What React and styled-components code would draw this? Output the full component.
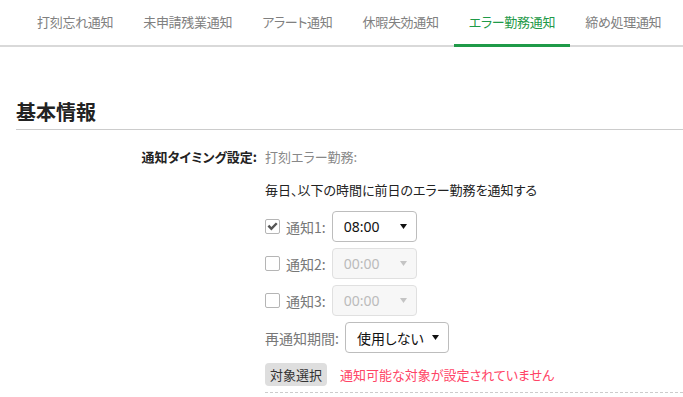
import React from 'react'
import styled, { createGlobalStyle, css } from 'styled-components'

const GlobalStyle = createGlobalStyle`
  body {
    margin: 0;
    background: #fff;
    font-family: "Noto Sans CJK JP", "Noto Sans", sans-serif;
    font-size: 13px;
    color: #333;
    font-feature-settings: "palt";
  }
`

const TabBar = styled.nav`
  display: flex;
  padding-left: 22px;
  border-bottom: 2px solid #d9d9d9;
`

const Tab = styled.div`
  height: 44px;
  line-height: 44px;
  padding: 0 15px;
  margin-bottom: -2px;
  border-bottom: 3px solid transparent;
  color: #808080;
  font-size: 13px;
  letter-spacing: -0.3px;
  white-space: nowrap;
  ${props => props.active && css`
    color: #1f9a48;
    border-bottom-color: #1f9a48;
  `}
`

const Heading = styled.h2`
  margin: 50px 0 0 16px;
  padding-bottom: 2px;
  font-size: 20px;
  font-weight: bold;
  line-height: 30px;
  color: #222;
  border-bottom: 1px solid #cccccc;
`

const Form = styled.div`
  display: grid;
  grid-template-columns: 257px 1fr;
  column-gap: 8px;
  margin-top: 17px;
`

const Label = styled.div`
  text-align: right;
  font-weight: bold;
  line-height: 20px;
  color: #222;
`

const Content = styled.div`
  display: flex;
  flex-direction: column;
  border-bottom: 1px dashed #cccccc;
  padding-bottom: 6px;
`

const Muted = styled.div`
  line-height: 20px;
  color: #888;
`

const Text = styled.div`
  line-height: 20px;
  margin-top: 13px;
  margin-bottom: 11px;
  color: #222;
`

const Row = styled.div`
  display: flex;
  align-items: center;
  gap: 6px;
  margin-bottom: ${props => props.last ? '10px' : '6px'};
`

const Box = styled.span`
  width: 15px;
  height: 15px;
  box-sizing: border-box;
  border: 1px solid #b5b5b5;
  border-radius: 2px;
  background: #fff;
  display: flex;
  align-items: center;
  justify-content: center;
`

const RowLabel = styled.span`
  color: #777;
  font-size: 14px;
  line-height: 20px;
  font-feature-settings: normal;
`

const SelectBox = styled.div`
  box-sizing: border-box;
  width: ${props => props.width}px;
  height: 31px;
  display: flex;
  align-items: center;
  justify-content: space-between;
  padding: 0 9px 0 11px;
  border: 1px solid ${props => props.disabled ? '#e0e0e0' : '#bdbdbd'};
  border-radius: 4px;
  background: ${props => props.disabled ? '#f7f7f7' : '#fff'};
  color: ${props => props.disabled ? '#bbbbbb' : '#111'};
  font-family: "Noto Sans", "Noto Sans CJK JP", sans-serif;
  font-size: 14px;
`

const SelectText = styled.span`
  font-family: "Noto Sans CJK JP", sans-serif;
`

const Caret = ({ disabled }) => (
  <svg width="7" height="5" viewBox="0 0 7 5">
    <path d="M0 0h7L3.5 5z" fill={disabled ? '#c4c4c4' : '#111'} />
  </svg>
)

const Check = () => (
  <svg width="11" height="9" viewBox="0 0 11 9">
    <path d="M0.5 4.6l1.8-1.8 2.1 2.1L8.9 0.4l1.7 1.7-6.2 6.3z" fill="#555" />
  </svg>
)

const Actions = styled.div`
  display: flex;
  align-items: center;
  gap: 13px;
`

const Button = styled.button`
  height: 23px;
  padding: 0 5px;
  border: none;
  border-radius: 4px;
  background: #dedede;
  color: #333;
  font-family: inherit;
  font-size: 13px;
  font-feature-settings: "palt";
`

const Error = styled.span`
  color: #ff4466;
  font-size: 13px;
`

const tabs = ['打刻忘れ通知', '未申請残業通知', 'アラート通知', '休暇失効通知', 'エラー勤務通知', '締め処理通知']

const times = [
  { n: 1, value: '08:00', on: true },
  { n: 2, value: '00:00' },
  { n: 3, value: '00:00' },
]

export default function App() {
  return (
    <>
      <GlobalStyle />
      <TabBar>
        {tabs.map(t => (
          <Tab key={t} active={t === 'エラー勤務通知'}>{t}</Tab>
        ))}
      </TabBar>
      <Heading>基本情報</Heading>
      <Form>
        <Label>通知タイミング設定:</Label>
        <Content>
          <Muted>打刻エラー勤務:</Muted>
          <Text>毎日、以下の時間に前日のエラー勤務を通知する</Text>
          {times.map(t => (
            <Row key={t.n}>
              <Box>{t.on && <Check />}</Box>
              <RowLabel>通知{t.n}:</RowLabel>
              <SelectBox width={85} disabled={!t.on}>
                <span>{t.value}</span>
                <Caret disabled={!t.on} />
              </SelectBox>
            </Row>
          ))}
          <Row last>
            <RowLabel>再通知期間:</RowLabel>
            <SelectBox width={104}>
              <SelectText>使用しない</SelectText>
              <Caret />
            </SelectBox>
          </Row>
          <Actions>
            <Button>対象選択</Button>
            <Error>通知可能な対象が設定されていません</Error>
          </Actions>
        </Content>
      </Form>
    </>
  )
}
